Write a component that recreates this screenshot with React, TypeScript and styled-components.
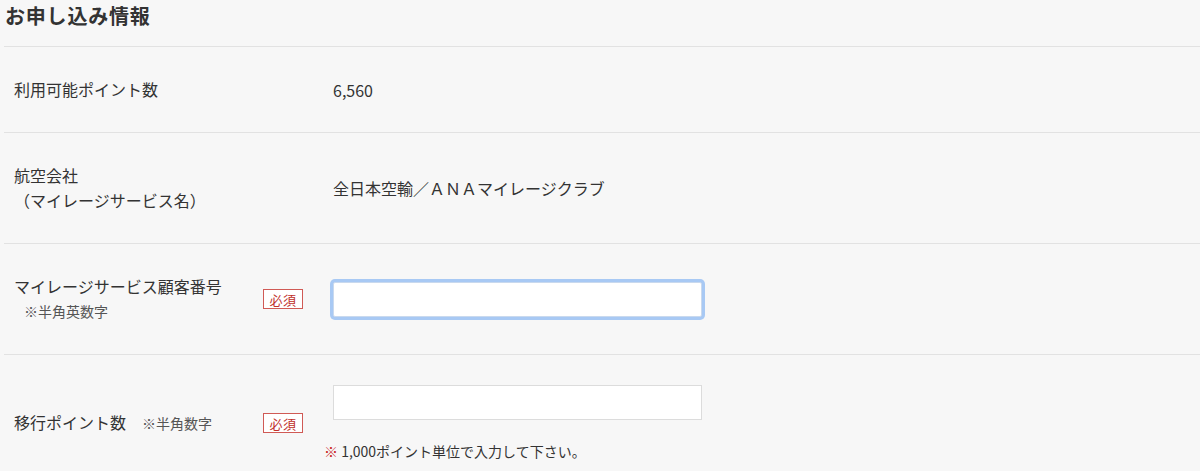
import React from "react";
import styled, { createGlobalStyle } from "styled-components";

const GlobalStyle = createGlobalStyle`
  html, body {
    margin: 0;
    padding: 0;
    background: #f7f7f7;
  }
  body {
    font-family: "Noto Sans CJK JP", "Noto Sans", sans-serif;
    color: #333;
  }
`;

export default function App() {
  return (
    <>
      <GlobalStyle />
      <Section>
        <Heading>お申し込み情報</Heading>
        <Table>
          <Row>
            <Label>利用可能ポイント数</Label>
            <BadgeCell />
            <Value>6,560</Value>
          </Row>
          <Row>
            <Label>
              航空会社
              <br />
              （マイレージサービス名）
            </Label>
            <BadgeCell />
            <Value>全日本空輸／ＡＮＡマイレージクラブ</Value>
          </Row>
          <Row>
            <Label>
              マイレージサービス顧客番号
              <SubNote>※半角英数字</SubNote>
            </Label>
            <BadgeCell>
              <Badge>必須</Badge>
            </BadgeCell>
            <Value>
              <TextInput type="text" $focused />
            </Value>
          </Row>
          <Row>
            <Label>
              移行ポイント数
              <InlineNote>※半角数字</InlineNote>
            </Label>
            <BadgeCell>
              <Badge>必須</Badge>
            </BadgeCell>
            <Value>
              <TextInput type="text" />
              <Notice>
                <Mark>※</Mark> 1,000ポイント単位で入力して下さい。
              </Notice>
            </Value>
          </Row>
        </Table>
      </Section>
    </>
  );
}

const Section = styled.section`
  margin-left: 4px;
`;

const Heading = styled.h2`
  margin: 0;
  padding: 0 0 14px 1px;
  font-size: 20px;
  line-height: 32px;
  font-weight: 700;
  letter-spacing: 0.8px;
  color: #333;
`;

const Table = styled.div`
  display: flex;
  flex-direction: column;
`;

const Row = styled.div`
  display: grid;
  grid-template-columns: 259px 70px 1fr;
  align-items: center;
  padding: 30px 0;
  border-top: 1px solid #e2e2e2;
`;

const Label = styled.div`
  padding-left: 10px;
  font-size: 16px;
  line-height: 25px;
  color: #333;
`;

const SubNote = styled.span`
  display: block;
  padding-left: 10px;
  font-size: 14px;
  color: #555;
`;

const InlineNote = styled.span`
  margin-left: 16px;
  font-size: 14px;
  color: #555;
`;

const BadgeCell = styled.div`
  display: flex;
  align-items: center;
`;

const Badge = styled.span`
  display: inline-flex;
  align-items: center;
  justify-content: center;
  box-sizing: border-box;
  width: 40px;
  height: 20px;
  border: 1px solid #d05a55;
  background: #fff;
  color: #c0302b;
  font-size: 13px;
  letter-spacing: 0.5px;
`;

const Value = styled.div`
  font-size: 16px;
  line-height: 24px;
  color: #333;
`;

const TextInput = styled.input<{ $focused?: boolean }>`
  display: block;
  box-sizing: border-box;
  width: 369px;
  height: 35px;
  margin: 0;
  border: 1px solid ${(p) => (p.$focused ? "#c9d9ee" : "#dcdcdc")};
  border-radius: ${(p) => (p.$focused ? "2px" : "0")};
  background: #fff;
  outline: none;
  box-shadow: ${(p) => (p.$focused ? "0 0 0 3px #a8c9f4" : "none")};
  font-size: 15px;
  font-family: inherit;
`;

const Notice = styled.p`
  margin: 21px 0 0 -9px;
  font-size: 14px;
  line-height: 20px;
  color: #333;
`;

const Mark = styled.span`
  color: #c8221e;
`;
